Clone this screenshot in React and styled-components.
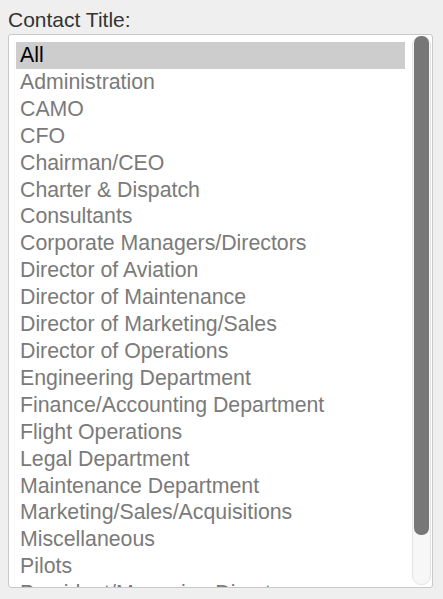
import React from 'react';
import styled, { createGlobalStyle } from 'styled-components';

const GlobalStyle = createGlobalStyle`
  html, body {
    margin: 0;
    padding: 0;
    background: #efefef;
  }
  body {
    font-family: "Liberation Sans", Arial, sans-serif;
  }
`;

const titles = [
  'All',
  'Administration',
  'CAMO',
  'CFO',
  'Chairman/CEO',
  'Charter & Dispatch',
  'Consultants',
  'Corporate Managers/Directors',
  'Director of Aviation',
  'Director of Maintenance',
  'Director of Marketing/Sales',
  'Director of Operations',
  'Engineering Department',
  'Finance/Accounting Department',
  'Flight Operations',
  'Legal Department',
  'Maintenance Department',
  'Marketing/Sales/Acquisitions',
  'Miscellaneous',
  'Pilots',
  'President/Managing Director',
  'Purchasing',
];

const Page = styled.div`
  padding: 8px;
  width: 425px;
`;

const Label = styled.div`
  font-size: 21px;
  line-height: 24px;
  color: #333;
  margin-bottom: 2px;
`;

const ListBox = styled.div`
  display: flex;
  height: 554px;
  box-sizing: border-box;
  background: #fff;
  border: 1px solid #c9c9c9;
  border-radius: 3px;
  overflow: hidden;
`;

const Options = styled.div`
  flex: 1;
  overflow: hidden;
  padding: 7px 7px 0 7px;
`;

const Option = styled.div`
  font-size: 21.3px;
  line-height: 26.9px;
  padding-left: 4px;
  white-space: nowrap;
  color: ${p => (p.$selected ? '#000' : '#7a7a7a')};
  background: ${p => (p.$selected ? '#cdcdcd' : 'transparent')};
`;

const ScrollColumn = styled.div`
  width: 19px;
  padding: 1px 1px 2px 0;
  display: flex;
`;

const Track = styled.div`
  flex: 1;
  background: #f7f7f7;
  border: 1px solid #e3e3e3;
  border-radius: 9px;
`;

const Thumb = styled.div`
  margin: -1px 1px 0 1px;
  background: #777;
  border-radius: 7px;
`;

export default function App() {
  const selected = 'All';
  const visible = 551;
  const content = 7 + titles.length * 26.9 + 8;
  const thumbHeight = Math.round((visible / content) * 549);

  return (
    <>
      <GlobalStyle />
      <Page>
        <Label>Contact Title:</Label>
        <ListBox>
          <Options>
            {titles.map(t => (
              <Option key={t} $selected={t === selected}>
                {t}
              </Option>
            ))}
          </Options>
          <ScrollColumn>
            <Track>
              <Thumb style={{ height: thumbHeight }} />
            </Track>
          </ScrollColumn>
        </ListBox>
      </Page>
    </>
  );
}
